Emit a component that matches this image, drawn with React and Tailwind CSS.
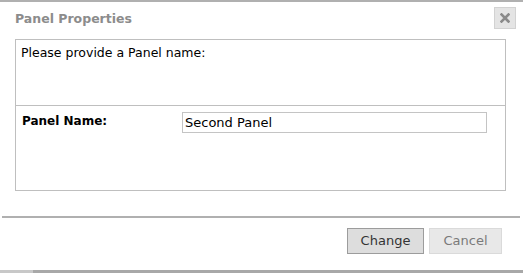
export default function App() {
  const font = { fontFamily: '"DejaVu Sans", Verdana, sans-serif' };
  return (
    <div className="relative w-[523px] h-[273px] bg-white overflow-hidden border-t-2 border-[#b0b0b0]" style={font}>
      <div className="flex justify-between items-start h-[37px] pl-[15px] pr-[7px]">
        <div className="mt-[9px] text-[12.5px] font-bold text-[#8c8c8c] leading-[16px]">Panel Properties</div>
        <button className="mt-[5px] w-[22px] h-[22px] bg-[#e4e4e4] border border-[#d2d2d2] flex items-center justify-center">
          <svg width="10" height="10" viewBox="0 0 10 10">
            <path d="M1.5 1.5 L8.5 8.5 M8.5 1.5 L1.5 8.5" stroke="#8a8a8a" strokeWidth="2.6" strokeLinecap="square" />
          </svg>
        </button>
      </div>
      <div className="ml-[15px] w-[491px] h-[152px] border border-[#bfbfbf] flex flex-col">
        <div className="h-[66px] border-b border-[#bfbfbf] pl-[5px] pt-[5px] text-[12.5px] leading-[16px] text-black">
          Please provide a Panel name:
        </div>
        <div className="flex items-start pt-[6px]">
          <div className="w-[166px] pl-[6px] pt-[1px] text-[12px] font-bold leading-[16px] text-black">Panel Name:</div>
          <input
            readOnly
            value="Second Panel"
            className="w-[305px] h-[21px] border border-[#c4c4c4] px-[2px] text-[13px] text-black outline-none"
            style={font}
          />
        </div>
      </div>
      <div className="ml-[2px] w-[518px] mt-[25px] border-t-2 border-[#b0b0b0]"></div>
      <div className="flex justify-end gap-[5px] pr-[21px] mt-[10px]">
        <button className="w-[77px] h-[26px] bg-[#dddddd] border border-[#9c9c9c] text-[13px] text-[#333]">Change</button>
        <button className="w-[73px] h-[26px] bg-[#e8e8e8] border border-[#dadada] text-[13px] text-[#7a7a7a]">Cancel</button>
      </div>
      <div className="absolute left-0 right-0 bottom-0 h-[3px] flex">
        <div className="w-[33px] bg-[#c8c8c8]"></div>
        <div className="flex-1 bg-[#a8a8a8]"></div>
      </div>
    </div>
  );
}
